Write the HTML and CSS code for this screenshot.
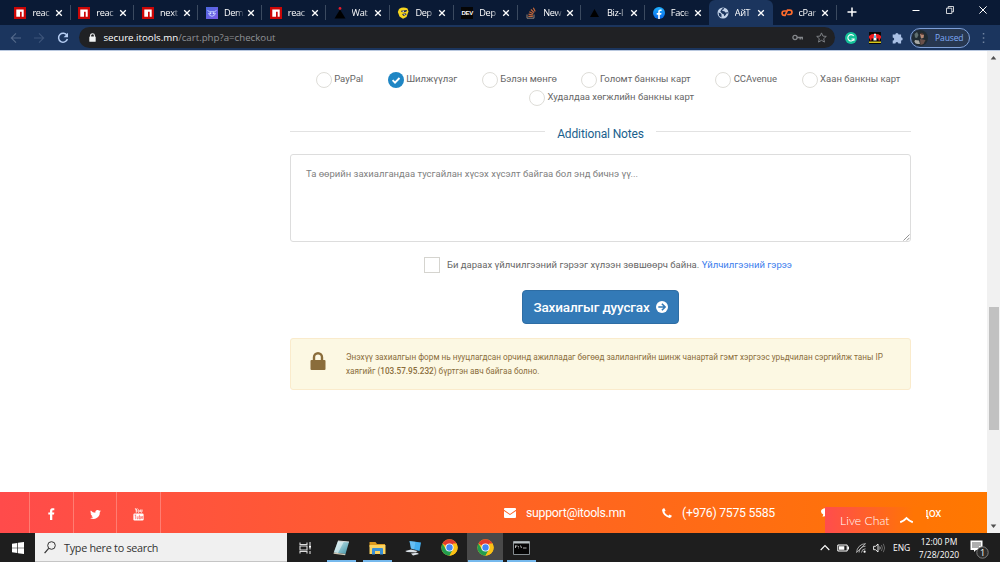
FILE: index.html
```html
<!DOCTYPE html>
<html lang="mn">
<head>
<meta charset="utf-8">
<title>Checkout</title>
<link rel="stylesheet" href="styles.css">
</head>
<body>
<svg width="0" height="0" class="defs">
  <defs>
    <linearGradient id="fbg" x1="0" y1="0" x2="0" y2="1"><stop offset="0" stop-color="#1eb0ff"/><stop offset="1" stop-color="#0866e8"/></linearGradient>
    <linearGradient id="demo" x1="0" y1="0" x2="1" y2="1"><stop offset="0" stop-color="#4a68df"/><stop offset="1" stop-color="#7d5be8"/></linearGradient>
    <linearGradient id="pad" x1="0" y1="0" x2="1" y2="1"><stop offset="0" stop-color="#d5f0f3"/><stop offset="1" stop-color="#3f91a5"/></linearGradient>
    <symbol id="npm" viewBox="0 0 12 12"><path fill="#cb0606" d="M0 0h12v12H0z"/><path fill="#fff" d="M2.3 2.5h7.4v7.2H7.7V4.700H6v5H2.300z"/></symbol>
    <symbol id="x" viewBox="0 0 8 8"><path d="M1.200 1.200l5.600 5.600M6.800 1.200L1.200 6.800" stroke="#fff" stroke-width="1.300" fill="none"/></symbol>
    <symbol id="chrome" viewBox="0 0 48 48"><circle cx="24" cy="24" r="23" fill="#fbc116"/><path fill="#e33b2e" d="M24 24L4.100 12.500A23 23 0 0 1 43.900 12.500z"/><path fill="#e33b2e" d="M24 12.500h19.900L24 24z"/><path fill="#229d4e" d="M4.100 12.500A23 23 0 0 0 24 47l10-17.300L24 24 14 29.700z"/><path fill="#fbc116" d="M24 47l10-17.300a11.500 11.500 0 0 0 0-11.500l-.3-5.700h10.200A23 23 0 0 1 24 47z"/><circle cx="24" cy="24" r="11.500" fill="#fff"/><circle cx="24" cy="24" r="9" fill="#4285f4"/></symbol>
  </defs>
</svg>

<div class="screen">
  <header class="tabstrip">
    <div class="tab"><svg class="fav"><use href="#npm"/></svg><span class="tab-title">reac</span><svg class="close"><use href="#x"/></svg></div>
    <div class="tab"><svg class="fav"><use href="#npm"/></svg><span class="tab-title">reac</span><svg class="close"><use href="#x"/></svg></div>
    <div class="tab"><svg class="fav"><use href="#npm"/></svg><span class="tab-title">next</span><svg class="close"><use href="#x"/></svg></div>
    <div class="tab"><svg class="fav" viewBox="0 0 12 12"><path fill="url(#demo)" d="M0 0h12v12H0z"/><path d="M1.500 3.500l2 1.200h5l2-1.200M2.500 6q.5 3 3.500 3.300Q9 9 9.500 6" fill="none" stroke="#c5d1ff" stroke-width=".9"/><circle cx="4.400" cy="6.300" r="1" fill="#d5dfff"/><circle cx="7.600" cy="6.300" r="1" fill="#d5dfff"/></svg><span class="tab-title">Dem</span><svg class="close"><use href="#x"/></svg></div>
    <div class="tab"><svg class="fav"><use href="#npm"/></svg><span class="tab-title">reac</span><svg class="close"><use href="#x"/></svg></div>
    <div class="tab"><svg class="fav" viewBox="0 0 12 12"><path fill="#000" d="M6 2.500L11.500 11.500H.5z"/><circle cx="6" cy="1.400" r="1.400" fill="#e81c2c"/></svg><span class="tab-title">Wat</span><svg class="close"><use href="#x"/></svg></div>
    <div class="tab"><svg class="fav" viewBox="0 0 12 12"><path fill="#f6d51f" d="M2 2Q6-.5 10.500 1.500L11.500 4.500 9.500 10 6 11.800 2.500 9.500.8 5z"/><path fill="#1c2750" d="M4 3.800l6-.8-.5 1.500-2 .8-3-.2zM5 7l4-.8.5 1.200-3 1.600z"/><path fill="#fff" d="M5.500 4l1.500-.2v.9H5.500zM6 7.200l2.500-.4-.5 1z"/></svg><span class="tab-title">Dep</span><svg class="close"><use href="#x"/></svg></div>
    <div class="tab"><span class="fav fav-dev">DEV</span><span class="tab-title">Dep</span><svg class="close"><use href="#x"/></svg></div>
    <div class="tab"><svg class="fav" viewBox="0 0 12 12"><path d="M2 7.500v3.700h7V7.500" stroke="#8d8178" fill="none"/><path d="M3.300 9.400h4.500M3.500 7.200l4.400.8M4.300 4.800l4 2M5.900 2.500l3.200 3.200M8.300.7l1.900 3.800" stroke="#c7693a" stroke-width="1.200" fill="none"/></svg><span class="tab-title">New</span><svg class="close"><use href="#x"/></svg></div>
    <div class="tab"><svg class="fav" viewBox="0 0 12 12"><path fill="#000" d="M5.500 2L10 10H1z"/></svg><span class="tab-title">Biz-I</span><svg class="close"><use href="#x"/></svg></div>
    <div class="tab"><svg class="fav" viewBox="0 0 12 12"><circle cx="6" cy="6" r="6" fill="url(#fbg)"/><path fill="#fff" d="M5.200 12V7.800H3.700V6.100h1.500V4.800c0-1.600.9-2.400 2.200-2.400l1.200.1V4h-.8c-.8 0-1 .4-1 .9v1.200h1.700l-.3 1.700H6.800V12z"/></svg><span class="tab-title">Face</span><svg class="close"><use href="#x"/></svg></div>
    <div class="tab tab-active"><svg class="fav" viewBox="0 0 12 12"><circle cx="6" cy="6" r="5.500" fill="#c3d3e9"/><path fill="#1b355e" d="M1.500 5.500l2 .8 1 1.200v3L2.200 9zM5.800 1l1.500.2-.8 1.200-1.400.6.500 1 1.800.2 1 1.400 2.600-.4.2 1-1.800.4-.7 1.400-1.500 1.200-.5-2L5 6.500 3.300 4.600l1-1.800z"/></svg><span class="tab-title">АйТ</span><svg class="close"><use href="#x"/></svg></div>
    <div class="tab tab-last"><svg class="fav" viewBox="0 0 12 12"><path fill="none" stroke="#ff6c2c" stroke-width="1.700" stroke-linecap="round" d="M5 4H3.300a2.200 2.200 0 0 0 0 4.400h.8L6.500 3.200h2.300a2.100 2.100 0 0 1 0 4.300H7"/></svg><span class="tab-title">cPar</span><svg class="close"><use href="#x"/></svg></div>
    <svg class="newtab" viewBox="0 0 10 10"><path d="M5 .5v9M.5 5h9" stroke="#fff" stroke-width="1.500"/></svg>
    <div class="winbtns">
      <svg width="8" height="10" viewBox="0 0 8 10"><path d="M.5 5.500h7" stroke="#fff"/></svg>
      <svg width="8" height="8" viewBox="0 0 8 8"><path d="M.5 2.200h5.300v5.300H.5zM2.200 2.200V.5h5.300v5.300H5.800" fill="none" stroke="#fff" stroke-width=".8"/></svg>
      <svg width="8" height="8" viewBox="0 0 8 8"><path d="M.4.4l7.200 7.200M7.600.4L.4 7.600" stroke="#fff" stroke-width="1"/></svg>
    </div>
  </header>

  <div class="toolbar">
    <div class="nav">
      <svg width="12" height="12" viewBox="0 0 12 12"><path d="M11 6H1.500M6 1.300L1.300 6 6 10.700" fill="none" stroke="#53688a" stroke-width="1.100"/></svg>
      <svg width="12" height="12" viewBox="0 0 12 12"><path d="M1 6h9.500M6 1.300L10.700 6 6 10.700" fill="none" stroke="#3d547a" stroke-width="1.100"/></svg>
      <svg width="12" height="12" viewBox="0 0 12 12"><path d="M10 3.500A4.500 4.500 0 1 0 10.400 7" fill="none" stroke="#b5cdf3" stroke-width="1.500"/><path d="M11 .8v4.400H6.600z" fill="#b5cdf3"/></svg>
    </div>
    <div class="address">
      <svg class="lock" viewBox="0 0 7 9"><path d="M1.600 4V2.600a1.900 1.900 0 0 1 3.800 0V4" fill="none" stroke="#f1f3f4" stroke-width="1.100"/><rect x=".3" y="3.500" width="6.400" height="5.300" rx=".6" fill="#f1f3f4"/></svg>
      <span class="url"><b>secure.itools.mn</b>/cart.php?a=checkout</span>
      <svg class="key" viewBox="0 0 11 7"><circle cx="3" cy="3.500" r="2.100" fill="none" stroke="#85888c" stroke-width="1.300"/><path d="M5 3.500h5.300v2M8.200 3.500v2" fill="none" stroke="#85888c" stroke-width="1.300"/></svg>
      <svg class="star" viewBox="0 0 11 11"><path d="M5.500.9l1.400 3.200 3.400.3-2.600 2.300.8 3.400-3-1.800-3 1.800.8-3.400L.7 4.400l3.400-.3z" fill="none" stroke="#85888c" stroke-width=".9"/></svg>
    </div>
    <div class="exts">
      <svg width="12" height="12" viewBox="0 0 12 12"><circle cx="6" cy="6" r="6" fill="#15c39a"/><path d="M8.700 4A3.200 3.200 0 1 0 9 7H6.500M9 6.500v2.300" fill="none" stroke="#fff" stroke-width="1.100"/></svg>
      <svg width="12" height="12" viewBox="0 0 12 12"><path fill="#080808" d="M0 0h12v12H0z"/><path fill="#ee1c22" d="M0 6.500V4q2-2.300 6-2.300T12 4v2.500z"/><path fill="#fff" d="M5 1.700h2V3l.6 5.500H4.400L5 3z"/><path fill="#169bd8" d="M5.300 3.300h1.400V6H5.300z"/><path fill="#d9c719" d="M0 9.500h12V11H0z"/><path fill="#ee1c22" d="M1 6h1.500v2.500H1zM9.500 6H11v2.500H9.500z"/></svg>
      <svg width="11" height="12" viewBox="0 0 11 12"><path fill="#a9c0e5" d="M3.300 2.500a1.600 1.600 0 0 1 3.200 0h2.600v2.800a1.600 1.600 0 0 1 0 3.200v2.900H6.400a1.500 1.500 0 0 0-3 0H.7V8.600a1.500 1.500 0 0 0 0-3V2.500z"/></svg>
    </div>
    <div class="profile">
      <svg width="16" height="16" viewBox="0 0 16 16"><circle cx="8" cy="8" r="8" fill="#202b31"/><path fill="#5e6f70" d="M2.500 4l2.500-2 1.500 3-1.500 3-2-.5z"/><path fill="#b78874" d="M8 4q3-1 4 1l-.5 3L9 8.500z"/><path fill="#4c3530" d="M8 3q3-1 4 2l-3-.5z"/><path fill="#a9aaa5" d="M3 10l4 .5 1 3.500H6Q3 14 2.500 11.500z"/><path fill="#69504b" d="M8 9l5.500 1-2 4-3 1z"/></svg>
      <span>Paused</span>
    </div>
    <svg class="dots" viewBox="0 0 3 12"><path fill="#71839f" d="M.8 1h1.500v1.500H.8zM.8 5.200h1.500v1.500H.8zM.8 9.400h1.500v1.500H.8z"/></svg>
  </div>

  <div class="viewport">
    <div class="page">
      <main class="checkout">
        <div class="gateways">
          <label><i class="radio"></i>PayPal</label>
          <label><i class="radio on"><svg viewBox="0 0 16 16"><path d="M4.600 8.200l2.400 2.400 4.500-4.600" fill="none" stroke="#fff" stroke-width="1.900"/></svg></i>Шилжүүлэг</label>
          <label><i class="radio"></i>Бэлэн мөнгө</label>
          <label><i class="radio"></i>Голомт банкны карт</label>
          <label><i class="radio"></i>CCAvenue</label>
          <label><i class="radio"></i>Хаан банкны карт</label>
          <label class="second-row"><i class="radio"></i>Худалдаа хөгжлийн банкны карт</label>
        </div>
        <h2 class="subhead"><span>Additional Notes</span></h2>
        <div class="notes"><span>Та өөрийн захиалгандаа тусгайлан хүсэх хүсэлт байгаа бол энд бичнэ үү...</span>
          <svg class="grip" viewBox="0 0 7 7"><path d="M.5 6.500l6-6M3.800 6.500l2.700-2.700" stroke="#777" stroke-width=".8"/></svg>
        </div>
        <div class="terms"><i class="checkbox"></i><span>Би дараах үйлчилгээний гэрээг хүлээн зөвшөөрч байна. <a>Үйлчилгээний гэрээ</a></span></div>
        <div class="submit">
          <span>Захиалгыг дуусгах</span>
          <svg width="12" height="12" viewBox="0 0 12 12"><circle cx="6" cy="6" r="6" fill="#fff"/><path d="M2.300 6h6.500M5.900 2.800L9.100 6 5.900 9.200" fill="none" stroke="#337ab7" stroke-width="1.600"/></svg>
        </div>
        <div class="alert">
          <svg width="16" height="18" viewBox="0 0 16 18"><path d="M4 9V5.200a4 4 0 0 1 8 0V9" fill="none" stroke="#8a6d3b" stroke-width="2.400"/><rect x=".5" y="8" width="15" height="10" rx="1" fill="#8a6d3b"/></svg>
          <p>Энэхүү захиалгын форм нь нууцлагдсан орчинд ажилладаг бөгөөд залилангийн шинж чанартай гэмт хэргээс урьдчилан сэргийлж таны IP<br>хаягийг (<b>103.57.95.232</b>) бүртгэн авч байгаа болно.</p>
        </div>
      </main>
      <footer class="footer">
        <div class="social">
          <span><svg width="7" height="12" viewBox="0 0 7 12"><path fill="#fff" d="M2 12V6.600H.3V4.400H2V3C2 1.200 3 .2 4.700.2l1.600.1v2h-1c-.8 0-1 .4-1 1v1.100h2l-.3 2.200H4.300V12z"/></svg></span>
          <span><svg width="11" height="9" viewBox="0 0 24 20"><path fill="#fff" d="M24 2.400a10 10 0 0 1-2.800.8A5 5 0 0 0 23.300.5a10 10 0 0 1-3.100 1.200 4.900 4.900 0 0 0-8.400 4.500A14 14 0 0 1 1.700 1a4.900 4.900 0 0 0 1.500 6.600A4.900 4.900 0 0 1 1 7a4.900 4.900 0 0 0 3.900 4.900 4.900 4.900 0 0 1-2.200.1 4.900 4.900 0 0 0 4.600 3.400A9.900 9.900 0 0 1 0 17.500 14 14 0 0 0 21.500 5z"/></svg></span>
          <span><svg width="11" height="13" viewBox="0 0 11 13"><path d="M2.300.3l1 2.100L4.200.3M3.300 2.200V4.600M5 2.300v1.500q.6 1 1.200 0V2.300q-.6-.9-1.200 0M7.700 1.500v2.400q.6.700 1.300-.1V1.500" fill="none" stroke="#fff" stroke-width=".9"/><rect x=".4" y="5.500" width="10.200" height="7" rx="1.200" fill="#fff"/><path d="M1.500 7h1.800M2.400 7v4.200M4.100 8.300v2.500h1V8.300M6.400 6.800v4.200h1V8.500h-1M9.800 10.500H8.600V8.500h1.100v1H8.600" fill="none" stroke="#ff5149" stroke-width=".6"/></svg></span>
        </div>
        <div class="contact mail"><svg width="12" height="10" viewBox="0 0 12 10"><path fill="#fff" d="M0 1Q0 0 1 0h10q1 0 1 1v.7L6 6 0 1.700zM0 2.900l6 4.200 6-4.200V9q0 1-1 1H1Q0 10 0 9z"/></svg><span>support@itools.mn</span></div>
        <div class="contact phone"><svg width="10" height="10" viewBox="0 0 10 10"><path fill="#fff" d="M.4 1.300Q1.300-.1 2.400.2l1.200 2.500-1.300 1q1 2.500 4 4l1.200-1.300L9.900 7.700Q9.500 9.700 7.600 9.900 1 8.500.1 2.600z"/></svg><span>(+976) 7575 5585</span></div>
        <div class="contact talk"><svg width="11" height="9" viewBox="0 0 11 9"><path fill="#fff" d="M5.500 0C8.500 0 11 1.500 11 3.500S8.500 7 5.500 7Q4 8.500 1.500 8.700L2.300 6.500Q0 5.500 0 3.500C0 1.500 2.500 0 5.500 0z"/></svg><span>дох</span></div>
        <div class="livechat"><span>Live Chat</span><svg width="15" height="8" viewBox="0 0 15 8"><path d="M1.200 6.200Q5 5 7.500 2.200 10 5 13.800 6.200" fill="none" stroke="#fff" stroke-width="2"/></svg></div>
      </footer>
    </div>
    <div class="scrollbar">
      <svg width="7" height="4" viewBox="0 0 7 4"><path fill="#505050" d="M3.500 0L6.300 3.500H.7z"/></svg>
      <i class="thumb"></i>
      <svg width="7" height="4" viewBox="0 0 7 4"><path fill="#505050" d="M.7.500h5.600L3.500 4z"/></svg>
    </div>
  </div>

  <div class="taskbar">
    <div class="start"><svg width="12" height="12" viewBox="0 0 12 12"><path fill="#fff" d="M0 1.700l5.300-.8v4.800H0zM6 .8L12 0v5.700H6zM0 6.300h5.300v4.800L0 10.300zM6 6.300h6V12l-6-.8z"/></svg></div>
    <div class="search"><svg width="12" height="13" viewBox="0 0 12 13"><circle cx="7.500" cy="4.500" r="3.800" fill="none" stroke="#333"/><path d="M4.700 7.300L.6 12.200" stroke="#333" stroke-width="1.200"/></svg><span>Type here to search</span></div>
    <div class="apps">
      <div class="app"><svg width="13" height="12" viewBox="0 0 13 12"><path d="M1 .5v2h7v-2M1 11.500v-2h7v2M1 4h7v4H1zM11 0v3M11 9v3M11 5v2.500" fill="none" stroke="#ddd" stroke-width="1.100"/><path fill="#fff" d="M10 3.500h2v2h-2z"/></svg></div>
      <div class="app run"><svg width="17" height="16" viewBox="0 0 17 16"><path fill="url(#pad)" d="M5 1l11 1-3.500 12L.8 12.500z"/><path fill="#f3fafa" d="M5 1l6 .6L5 13 .8 12.500z" opacity=".55"/><path fill="#cfc9b5" d="M.8 12.500l11.700 1.500-.4 1.200L.5 13.700z"/><path d="M5 1l11 1" stroke="#d8d8d8"/></svg></div>
      <div class="app run"><svg width="17" height="14" viewBox="0 0 17 14"><path fill="#dc9a1e" d="M.5 1h6l1.500 2h8v3H.5z"/><path fill="#fbd462" d="M.5 4h16v9H.5z"/><path fill="#388fd6" d="M3 8q0-1 1-1h9q1 0 1 1v5.500h-3V10H6v3.500H3z"/></svg></div>
      <div class="app"><svg width="17" height="16" viewBox="0 0 17 16"><path fill="#43aeef" d="M4.500 1L16 2.500 14.500 11 6 8.500z"/><path fill="#92d5fa" d="M4.500 1l6 .8L9 9.500 6 8.500z" opacity=".45"/><path fill="#dce2e8" d="M6 9.500l6.500 1.500-2 1.500L2 12 .2 11zM6 13.500l6-.7 2 1.200-6 1.500z"/></svg></div>
      <div class="app"><svg width="17" height="17"><use href="#chrome"/></svg></div>
      <div class="app run current"><svg width="17" height="17"><use href="#chrome"/></svg></div>
      <div class="app run"><svg width="17" height="14" viewBox="0 0 17 14"><path fill="#050505" stroke="#858c90" d="M.5.500h16v13H.5z"/><path fill="#b9c0c3" d="M.5.500h16v2H.5z"/><path d="M2.500 5h2M2.500 4.500v2.500M5.500 5v.8M5.500 6.600v.7M7.500 4.500l1 2.500M10 7h3.500" stroke="#ddd" fill="none" stroke-width=".8"/></svg></div>
    </div>
    <div class="tray">
      <svg width="10" height="7" viewBox="0 0 10 7"><path d="M.7 6L5 1.500 9.300 6" fill="none" stroke="#fff" stroke-width="1.100"/></svg>
      <svg width="12" height="8" viewBox="0 0 12 8"><path d="M.8 1h9.400v6H.8z" fill="none" stroke="#fff"/><path fill="#fff" d="M2 2.200h5.300v3.600H2zM10.500 2.500H12v3h-1.500z"/></svg>
      <svg width="10" height="10" viewBox="0 0 10 10"><path d="M.6 9.500A9 9 0 0 1 9.500.7M3 9.500a6.500 6.500 0 0 1 6.500-6.300M5.500 9.500a4 4 0 0 1 4-3.700M.6 9.500l9-9" fill="none" stroke="#ccc" stroke-width=".8"/><circle cx="8.600" cy="8.700" r="1.100" fill="#fff"/></svg>
      <svg width="13" height="10" viewBox="0 0 13 10"><path d="M.6 3.300h1.900L5 1v8L2.500 6.700H.6z" fill="none" stroke="#fff" stroke-width=".9"/><path d="M6.700 3.500q1 1.500 0 3" fill="none" stroke="#ddd" stroke-width=".8"/><path d="M8.400 2q2 3 0 6M10.300.8q2.800 4.200 0 8.400" fill="none" stroke="#777" stroke-width=".8"/></svg>
      <span class="lang">ENG</span>
      <div class="clock"><span>12:00 PM</span><span>7/28/2020</span></div>
      <svg class="notif" width="19" height="19" viewBox="0 0 19 19"><path fill="#fff" d="M.5.500h12v9.500H6L4 12v-2H.5z"/><path d="M2 3h9M2 5h9M2 7h7" stroke="#333" stroke-width=".8"/><circle cx="12.500" cy="12.500" r="5.700" fill="#2b2b2b" stroke="#888" stroke-width=".9"/><text x="12.500" y="15.800" text-anchor="middle" class="badge">1</text></svg>
    </div>
  </div>
</div>
</body>
</html>
```
FILE: styles.css
```css
* { box-sizing: border-box; }
body { margin: 0; background: #fff; font-family: Roboto, sans-serif; overflow: hidden; }
svg { display: block; flex: none; }
.defs { position: absolute; }
.screen { width: 1000px; height: 562px; display: flex; flex-direction: column; overflow: hidden; }

/* Tab strip */
.tabstrip { height: 25px; flex: none; display: flex; align-items: flex-start; padding-left: 6.8px; background: #0a1a35; font-family: "Open Sans", sans-serif; }
.tab { width: 63.850px; height: 25px; flex: none; display: flex; align-items: center; padding-left: 7.600px; background: linear-gradient(#3b4a60, #3b4a60) right 5px / 1px 15px no-repeat; }
.tab:nth-child(11) { background: none; }
.tab.tab-active { background: #1b355e; border-radius: 6px 6px 0 0; }
.fav { width: 12px; height: 12px; flex: none; }
.fav-dev { background: #050505; color: #fff; font: bold 6px/12px "Liberation Sans", sans-serif; text-align: center; letter-spacing: -.3px; }
.tab-title { width: 19px; margin-left: 6px; white-space: nowrap; color: #fff; font-size: 9.200px; line-height: 14px; letter-spacing: -.35px; -webkit-mask-image: linear-gradient(90deg, #000 65%, rgba(0,0,0,.15)); mask-image: linear-gradient(90deg, #000 65%, rgba(0,0,0,.15)); }
.close { width: 8px; height: 8px; margin-left: 3.800px; }
.newtab { width: 10px; height: 10px; margin: 7px 0 0 10.500px; }
.winbtns { margin-left: auto; padding: 0 13px 0 0; height: 20px; display: flex; align-items: center; gap: 25.500px; }

/* Toolbar */
.toolbar { height: 26px; flex: none; display: flex; align-items: center; background: #1b355e; border-bottom: 1px solid #b9c8df; font-family: "Open Sans", sans-serif; }
.nav { width: 79px; padding-left: 10px; display: flex; gap: 11.300px; }
.address { width: 756px; height: 21px; border-radius: 11px; background: #202124; display: flex; align-items: center; padding-left: 9.500px; }
.lock { width: 7px; height: 9px; }
.url { margin-left: 8px; color: #8f9296; font-size: 9.700px; line-height: 14px; }
.url b { color: #fff; font-weight: 400; }
.key { width: 11px; height: 7px; margin-left: auto; }
.star { width: 11px; height: 11px; margin: 0 8px 0 13px; }
.exts { display: flex; gap: 11.500px; margin-left: 10px; }
.profile { width: 60px; height: 20px; margin-left: 7px; border: 1px solid #7e9fd6; border-radius: 10px; background: #273750; display: flex; align-items: center; gap: 7px; padding-left: 1px; color: #7faaf5; font-size: 8.500px; letter-spacing: -.1px; }
.dots { width: 3px; height: 12px; margin-left: 12px; }

/* Viewport */
.viewport { height: 482px; flex: none; display: flex; }
.page { width: 987px; display: flex; flex-direction: column; }
.scrollbar { width: 13px; background: #f1f1f1; display: flex; flex-direction: column; align-items: center; padding: 5px 0 5px; }
.thumb { width: 10px; height: 123px; background: #c1c1c1; margin: 247px 0 auto; }
.checkout { width: 621px; margin-left: 290px; flex: 1; display: flex; flex-direction: column; align-items: center; color: #666; font-size: 9.500px; }
.gateways { width: 621px; margin-top: 20px; padding-left: 15px; display: flex; flex-wrap: wrap; justify-content: center; column-gap: 24.500px; row-gap: 1px; }
.gateways label { display: flex; gap: 2.500px; height: 17px; line-height: 16px; white-space: nowrap; }
.gateways .second-row { padding-left: 7px; }
.radio { width: 16px; height: 16px; border: 1px solid #deddd8; border-radius: 50%; background: #fff; margin-top: .5px; }
.radio.on { border: 0; background: #1f86c4; }
.subhead { width: 621px; height: 16px; margin: 20px 0 0; display: flex; align-items: center; gap: 12px; color: #1a5f8d; font-size: 12px; letter-spacing: -.14px; font-weight: 400; line-height: 16px; white-space: nowrap; }
.subhead::before, .subhead::after { content: ""; flex: 1; height: 1px; background: #e2e2e2; margin-top: -5px; }
.notes { width: 621px; height: 88px; margin-top: 12px; border: 1px solid #ddd; border-radius: 3px; padding: 12px 15px; color: #808080; line-height: 14px; display: flex; justify-content: space-between; }
.grip { width: 7px; height: 7px; align-self: flex-end; margin: 0 -15px -12px 0; }
.terms { margin-top: 14px; height: 17px; display: flex; align-items: center; gap: 7px; white-space: nowrap; padding-left: 15px; }
.terms a { color: #3b7ded; }
.checkbox { width: 16px; height: 16px; border: 1px solid #d5d4cf; background: #fff; }
.submit { width: 157px; height: 34px; margin-top: 17px; display: flex; justify-content: center; align-items: center; gap: 6px; border: 1px solid #2e6da4; border-radius: 4px; background: #337ab7; color: #fff; font-size: 13.500px; font-weight: 500; letter-spacing: -.15px; white-space: nowrap; }
.alert { width: 621px; height: 52px; margin-top: 14px; border: 1px solid #faebcc; border-radius: 3px; background: #fcf8e3; color: #8a6d3b; display: flex; padding: 13px 19px; }
.alert p { margin: -2px 0 0 20px; font-size: 8.210px; line-height: 14px; white-space: nowrap; }
.alert b { font-weight: 500; }

/* Footer */
.footer { position: relative; height: 41px; background: linear-gradient(90deg, #ff4b4b, #ff7800); display: flex; align-items: center; color: #fff; }
.social { height: 41px; margin-left: 29px; display: flex; border-left: 1px solid #ff7d72; }
.social span { width: 43.700px; height: 41px; padding-top: 3px; border-right: 1px solid #ff7d72; display: flex; align-items: center; justify-content: center; }
.contact { display: flex; align-items: center; gap: 10px; font-size: 12.300px; letter-spacing: -.3px; line-height: 16px; white-space: nowrap; }
.mail { margin-left: 343px; }
.mail span { width: 99px; }
.phone { margin-left: 37px; gap: 10px; }
.phone span { width: 93px; }
.talk { margin-left: 46px; gap: 89.500px; }
.livechat { position: absolute; left: 825px; bottom: 0; width: 101px; height: 26px; padding-left: 15px; display: flex; align-items: center; gap: 10px; background: linear-gradient(90deg, #ff4d4d, #ff7504 88%); font: 300 12.200px Lato, sans-serif; white-space: nowrap; }

/* Taskbar */
.taskbar { height: 29px; flex: none; display: flex; background: #1e1e1e; color: #fff; font-family: "Open Sans", sans-serif; }
.start { width: 35px; display: flex; align-items: center; justify-content: center; }
.search { width: 252px; background: #f0f0f0; border-bottom: 1px solid #c5c5c5; color: #333; display: flex; align-items: center; padding-left: 9px; gap: 8px; font-size: 10.800px; letter-spacing: -.27px; white-space: nowrap; }
.apps { display: flex; }
.app { width: 36px; height: 29px; display: flex; align-items: center; justify-content: center; }
.app.run { background: linear-gradient(#76b9ed, #76b9ed) center bottom / 29px 2px no-repeat; }
.app.current { background: linear-gradient(#76b9ed, #76b9ed) bottom / 35px 2px no-repeat, #494949; }
.tray { margin-left: auto; padding-right: 11px; display: flex; align-items: center; font-size: 8.500px; white-space: nowrap; }
.tray > svg { margin-right: 7px; }
.lang { width: 18px; }
.clock { width: 42px; margin-left: 7px; display: flex; flex-direction: column; align-items: center; line-height: 13px; }
.tray .notif { margin: 4px 0 0 10px; }
.badge { font: 9px "Open Sans", sans-serif; fill: #fff; }
```
